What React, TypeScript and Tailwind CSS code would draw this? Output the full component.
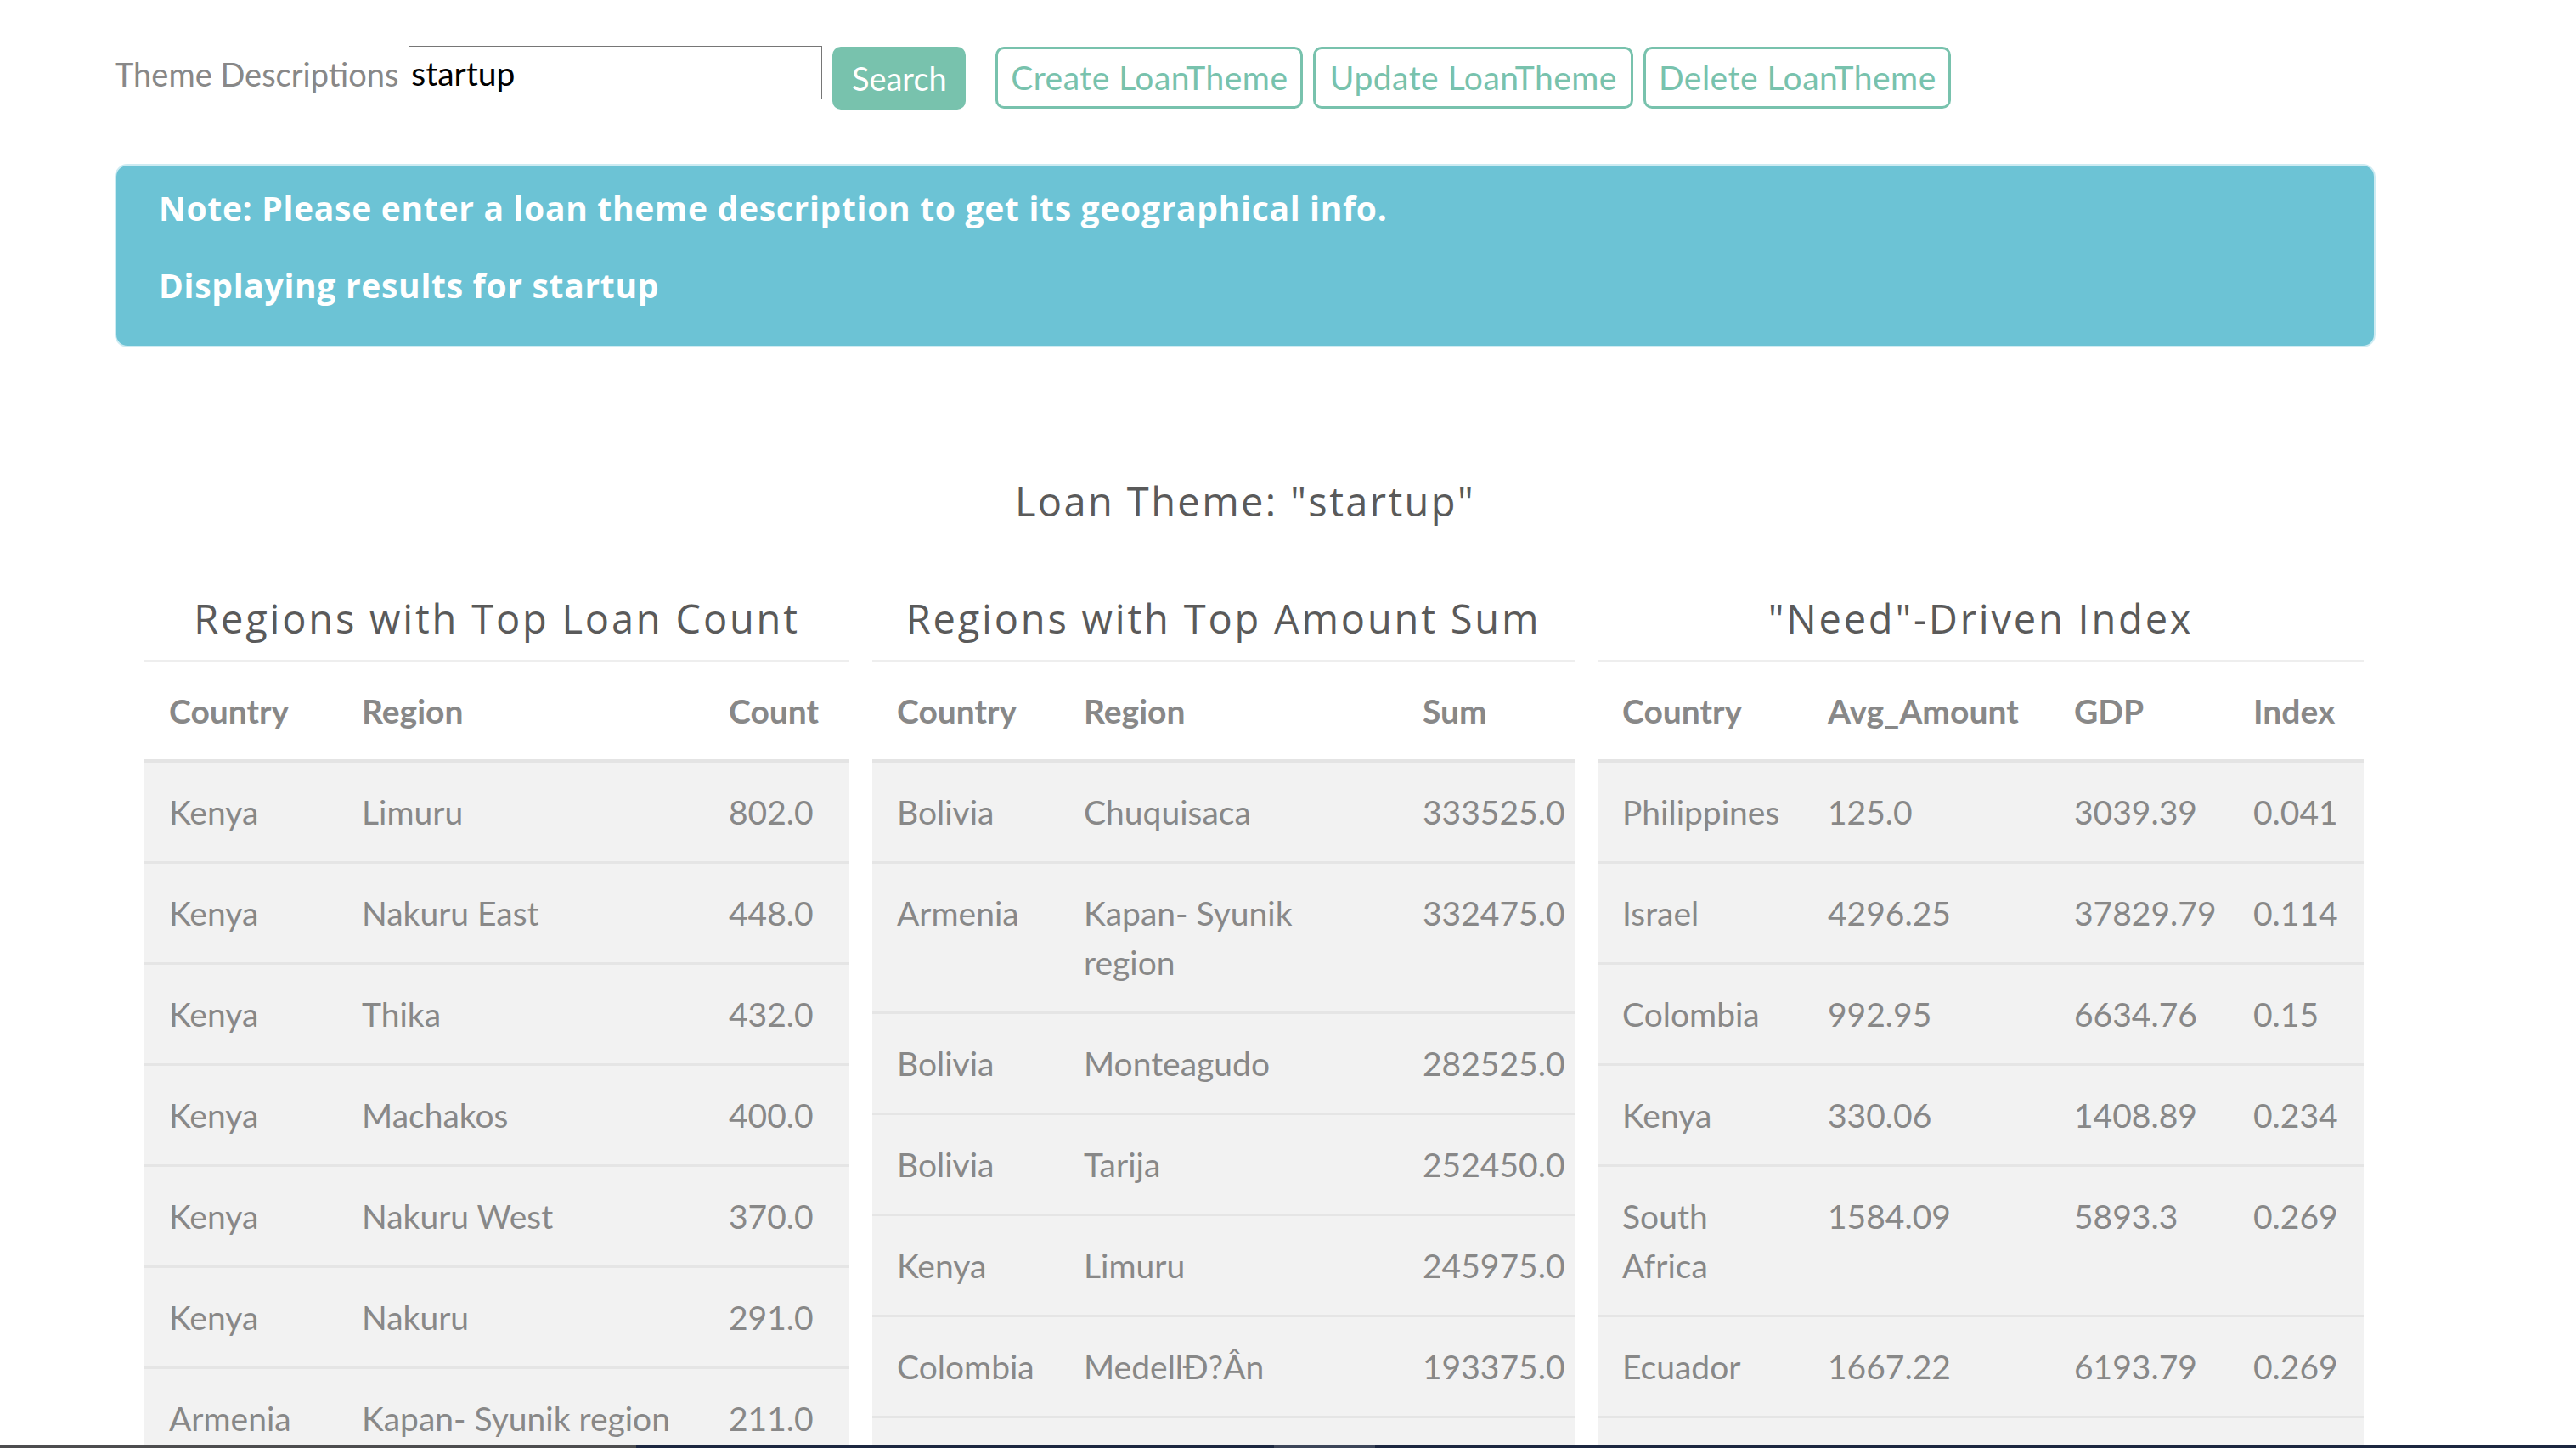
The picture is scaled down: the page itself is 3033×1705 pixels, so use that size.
import React from "react";

const body = "font-['Lato','Liberation_Sans',sans-serif]";
const head = "font-['Open_Sans','DejaVu_Sans',sans-serif]";

type Table = {
  title: string;
  width: string;
  cols: { label: string; w: string }[];
  rows: string[][];
};

const tables: Table[] = [
  {
    title: "Regions with Top Loan Count",
    width: "w-[830px]",
    cols: [
      { label: "Country", w: "w-[227px]" },
      { label: "Region", w: "w-[432px]" },
      { label: "Count", w: "w-[171px]" },
    ],
    rows: [
      ["Kenya", "Limuru", "802.0"],
      ["Kenya", "Nakuru East", "448.0"],
      ["Kenya", "Thika", "432.0"],
      ["Kenya", "Machakos", "400.0"],
      ["Kenya", "Nakuru West", "370.0"],
      ["Kenya", "Nakuru", "291.0"],
      ["Armenia", "Kapan- Syunik region", "211.0"],
    ],
  },
  {
    title: "Regions with Top Amount Sum",
    width: "w-[827px]",
    cols: [
      { label: "Country", w: "w-[220px]" },
      { label: "Region", w: "w-[399px]" },
      { label: "Sum", w: "w-[208px]" },
    ],
    rows: [
      ["Bolivia", "Chuquisaca", "333525.0"],
      ["Armenia", "Kapan- Syunik region", "332475.0"],
      ["Bolivia", "Monteagudo", "282525.0"],
      ["Bolivia", "Tarija", "252450.0"],
      ["Kenya", "Limuru", "245975.0"],
      ["Colombia", "MedellÐ?Ân", "193375.0"],
      ["\u00a0", "", ""],
    ],
  },
  {
    title: "\"Need\"-Driven Index",
    width: "w-[902px]",
    cols: [
      { label: "Country", w: "w-[242px]" },
      { label: "Avg_Amount", w: "w-[290px]" },
      { label: "GDP", w: "w-[211px]" },
      { label: "Index", w: "w-[159px]" },
    ],
    rows: [
      ["Philippines", "125.0", "3039.39", "0.041"],
      ["Israel", "4296.25", "37829.79", "0.114"],
      ["Colombia", "992.95", "6634.76", "0.15"],
      ["Kenya", "330.06", "1408.89", "0.234"],
      ["South Africa", "1584.09", "5893.3", "0.269"],
      ["Ecuador", "1667.22", "6193.79", "0.269"],
      ["\u00a0", "", "", ""],
    ],
  },
];

const outlineButtons = [
  { label: "Create LoanTheme", w: "w-[362px]" },
  { label: "Update LoanTheme", w: "w-[377px]" },
  { label: "Delete LoanTheme", w: "w-[362px]" },
];

function DataTable({ t }: { t: Table }) {
  return (
    <div className={`${t.width} shrink-0`}>
      <h4
        className={`${head} text-center text-[47px] leading-[56px] tracking-[2.8px] text-[#5a5a5a] mb-[21px]`}
      >
        {t.title}
      </h4>
      <table className={`${body} table-fixed border-collapse w-full text-[39px] leading-[58px] text-[#888]`}>
        <colgroup>
          {t.cols.map((c) => (
            <col key={c.label} className={c.w} />
          ))}
        </colgroup>
        <thead>
          <tr>
            {t.cols.map((c) => (
              <th
                key={c.label}
                className="text-left font-bold px-[29px] py-[28px] border-t-[3px] border-t-[#eeeeee] border-b-[4px] border-b-[#e4e4e4]"
              >
                {c.label}
              </th>
            ))}
          </tr>
        </thead>
        <tbody>
          {t.rows.map((r, i) => (
            <tr key={i} className="bg-[#f2f2f2]">
              {r.map((v, j) => (
                <td
                  key={j}
                  className="align-top px-[29px] py-[29px] border-t-[3px] border-[#e5e5e5]"
                >
                  {v}
                </td>
              ))}
            </tr>
          ))}
        </tbody>
      </table>
    </div>
  );
}

export default function App() {
  return (
    <div className="relative h-[1705px] overflow-hidden bg-white">
      <div className="ml-[135px] pt-[54px] w-[2662px]">
        <div className="flex items-start">
          <label className={`${body} text-[38px] leading-[58px] text-[#888] mt-[4px] mr-[12px] whitespace-nowrap`}>
            Theme Descriptions
          </label>
          <input
            defaultValue="startup"
            className={`${body} w-[487px] h-[63px] border border-[#767676] text-black text-[39px] px-[2px] outline-none`}
          />
          <button className={`${body} ml-[12px] mt-[1px] w-[157px] h-[74px] rounded-[10px] bg-[#78c2ad] text-white text-[38px]`}>
            Search
          </button>
          <div className="flex ml-[35px] mt-[1px] gap-[12px]">
            {outlineButtons.map((b) => (
              <button
                key={b.label}
                className={`${body} ${b.w} h-[73px] rounded-[10px] border-[3px] border-[#78c2ad] text-[#78c2ad] text-[39px] tracking-[0.5px]`}
              >
                {b.label}
              </button>
            ))}
          </div>
        </div>

        <div className="mt-[64px] h-[216px] rounded-[15px] border-2 border-[#cdebf2] bg-[#6cc3d5] pl-[50px] pt-[26px] text-white">
          <p className={`${head} font-bold text-[39px] leading-[48px] tracking-[0.7px]`}>
            Note: Please enter a loan theme description to get its geographical info.
          </p>
          <p className={`${head} font-bold text-[39px] leading-[48px] tracking-[0.7px] mt-[43px]`}>
            Displaying results for startup
          </p>
        </div>

        <h3 className={`${head} mt-[153px] text-center text-[47px] leading-[56px] tracking-[2.4px] text-[#5a5a5a]`}>
          Loan Theme: "startup"
        </h3>

        <div className="flex gap-[27px] ml-[35px] mt-[82px]">
          {tables.map((t) => (
            <DataTable key={t.title} t={t} />
          ))}
        </div>
      </div>
      <div className="absolute bottom-0 left-0 right-0 h-[3px] flex">
        <div className="w-[749px] bg-[#4d4d4f]" />
        <div className="w-[751px] bg-[#1c2740]" />
        <div className="w-[119px] bg-[#3d4659]" />
        <div className="flex-1 bg-[#1c2740]" />
      </div>
    </div>
  );
}
